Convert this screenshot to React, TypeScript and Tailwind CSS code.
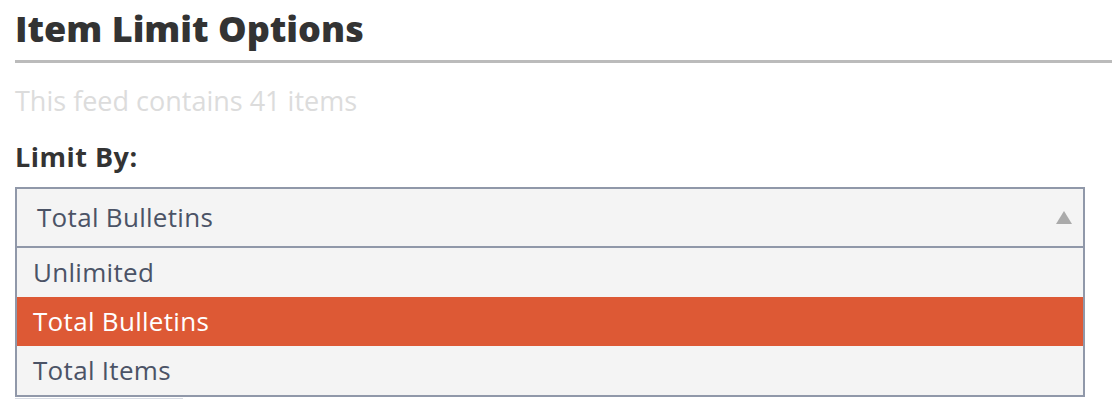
import React from 'react';

const options = ['Unlimited', 'Total Bulletins', 'Total Items'];

export default function App() {
  const selected = 'Total Bulletins';

  return (
    <div className="w-[1112px] h-[418px] overflow-hidden bg-white pl-[15px] font-['Open_Sans','Liberation_Sans',sans-serif]">
      {/* heading */}
      <h1 className="pt-[7px] text-[36px] leading-[44px] font-extrabold text-[#333333]">
        Item Limit Options
      </h1>
      <div className="mt-[9px] h-[3px] bg-[#bbbbbb]" />

      <p className="mt-[22px] text-[27px] leading-[32px] text-[#dcdcdc]">This feed contains 41 items</p>

      <label className="block mt-[24px] text-[27px] leading-[32px] font-bold tracking-[0.5px] text-[#333333]">
        Limit By:
      </label>

      {/* open select */}
      <div className="mt-[14px] w-[1070px]">
        <div className="flex items-center justify-between h-[61px] border-2 border-[#9098a9] bg-[#f4f4f4] pl-[20px] pr-[10px]">
          <span className="text-[26px] tracking-[0.3px] text-[#4b5366]">{selected}</span>
          <svg width="16" height="13" viewBox="0 0 16 13" className="mr-[1px]">
            <polygon points="8,0 16,13 0,13" fill="#aaaaaa" />
          </svg>
        </div>
        <ul className="border-2 border-t-0 border-[#9098a9] bg-[#f4f4f4]">
          {options.map((opt) => (
            <li
              key={opt}
              className={`h-[49px] flex items-center pl-[16px] text-[26px] tracking-[0.3px] ${
                opt === selected ? 'bg-[#dd5935] text-white' : 'text-[#4b5366]'
              }`}
            >
              {opt}
            </li>
          ))}
        </ul>
        <div className="mt-[1px] h-[1px] w-[168px] bg-[#d6dae2]" />
      </div>
    </div>
  );
}
